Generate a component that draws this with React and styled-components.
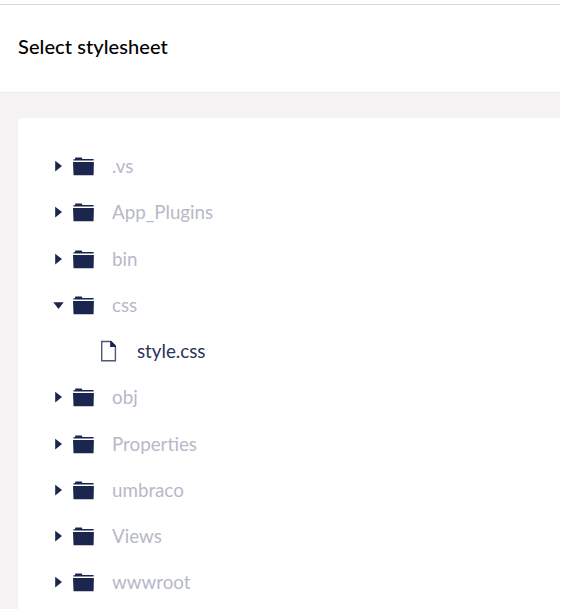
import React from "react";
import styled, { createGlobalStyle } from "styled-components";

const GlobalStyle = createGlobalStyle`
  * { box-sizing: border-box; }
  body { margin: 0; background: #fff; font-family: Lato, sans-serif; overflow: hidden; }
`;

const Dialog = styled.main`
  display: flex;
  flex-direction: column;
  width: 560px;
  height: 609px;
  padding-top: 4px;
  overflow: hidden;
`;

const Header = styled.header`
  display: flex;
  align-items: center;
  flex: 0 0 89px;
  padding: 0 18px 5px;
  border-top: 1px solid #d8d7d9;
  border-bottom: 1px solid #e9e9eb;
`;

const Title = styled.h1`
  margin: 0;
  font-size: 20px;
  line-height: 24px;
  font-weight: 500;
  letter-spacing: 0.08px;
  color: #000;
`;

const Content = styled.div`
  flex: 1;
  min-height: 0;
  padding: 25px 0 0 18px;
  background: #f5f3f4;
`;

const Panel = styled.section`
  height: 100%;
  padding: 25px 0 0 36px;
  background: #fff;
  border-radius: 4px 0 0 0;
  box-shadow: 0 1px 1px rgba(0, 0, 0, 0.14);
`;

const Tree = styled.ul`
  margin: 0;
  padding: 0;
  list-style: none;
`;

const Row = styled.li`
  display: flex;
  align-items: center;
  height: 46.25px;
  padding-left: ${(p) => (p.$nested ? "43px" : "0")};
`;

const Caret = styled.svg`
  flex: none;
  width: 10px;
  height: 12px;
  margin-right: 8px;
  fill: #1b264f;
  overflow: visible;
`;

const Icon = styled.svg`
  flex: none;
  width: 24px;
  height: 24px;
  fill: #1b264f;
`;

const Label = styled.span`
  margin-left: 16px;
  font-size: 18.75px;
  line-height: 24px;
  white-space: nowrap;
  color: ${(p) => (p.$active ? "#2a3459" : "#b6b9c8")};
`;

const items = [
  { name: ".vs" },
  { name: "App_Plugins" },
  { name: "bin" },
  { name: "css", open: true },
  { name: "style.css", file: true },
  { name: "obj" },
  { name: "Properties" },
  { name: "umbraco" },
  { name: "Views" },
  { name: "wwwroot" },
];

function FolderIcon() {
  return (
    <Icon viewBox="0 0 24 24">
      <path d="M1.4 6.4V5.3h1.5l.5-1.7h6.3l.7 1.5h11.2v1.3z" />
      <path d="M1 7.9h20.9l-.3 12.8q0 .5-.5.5H2q-.5 0-.5-.5z" />
    </Icon>
  );
}

function FileIcon() {
  return (
    <Icon viewBox="0 0 24 24">
      <path
        d="M4.7 2.5h8.9l4.8 4.8v14.4H4.7z"
        fill="none"
        stroke="#4d5778"
        strokeWidth="1.4"
      />
      <path d="M13.1 1.9h1.2L19 6.7v1.2h-5.9z" />
    </Icon>
  );
}

function TreeRow({ name, open, file }) {
  return (
    <Row $nested={file}>
      {!file && (
        <Caret viewBox="0 0 10 12">
          <path d={open ? "M-.7 3.3H9.7L4.5 9.9z" : "M1.2 .8v10.6l6.8-5.3z"} />
        </Caret>
      )}
      {file ? <FileIcon /> : <FolderIcon />}
      <Label $active={file}>{name}</Label>
    </Row>
  );
}

export default function App() {
  return (
    <>
      <GlobalStyle />
      <Dialog>
        <Header>
          <Title>Select stylesheet</Title>
        </Header>
        <Content>
          <Panel>
            <Tree>
              {items.map((item) => (
                <TreeRow key={item.name} {...item} />
              ))}
            </Tree>
          </Panel>
        </Content>
      </Dialog>
    </>
  );
}
